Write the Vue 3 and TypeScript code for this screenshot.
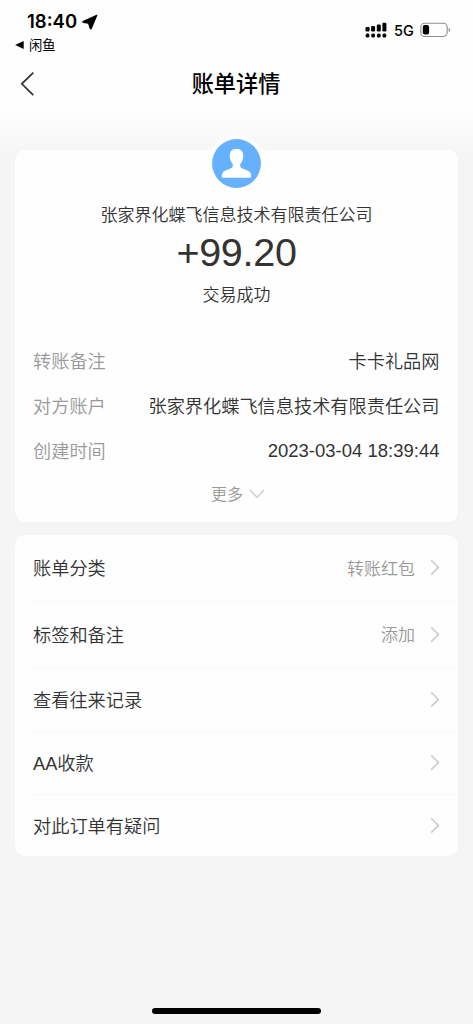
<script setup lang="ts">
interface Detail {
  label: string
  value: string
  numeric?: boolean
}

interface MenuItem {
  label: string
  value?: string
  size: 'tall' | 'medium' | 'short' | 'last'
}

const company = '张家界化蝶飞信息技术有限责任公司'

const details: Detail[] = [
  { label: '转账备注', value: '卡卡礼品网' },
  { label: '对方账户', value: company },
  { label: '创建时间', value: '2023-03-04 18:39:44', numeric: true },
]

const menu: MenuItem[] = [
  { label: '账单分类', value: '转账红包', size: 'tall' },
  { label: '标签和备注', value: '添加', size: 'tall' },
  { label: '查看往来记录', size: 'medium' },
  { label: 'AA收款', size: 'short' },
  { label: '对此订单有疑问', size: 'last' },
]
</script>

<template>
  <div class="screen">
    <header class="top">
      <div class="status">
        <div class="status-left">
          <div class="clock">
            <span>18:40</span>
            <svg class="locate" width="16" height="16" viewBox="0 0 16 16">
              <path d="M14.8 1.2 L1 7.4 Q0.6 8.3 1.4 8.5 L6.6 9.3 L8.2 14.6 Q8.9 15.2 9.3 14.5 Z" fill="#000" stroke="#000" stroke-width="1.1" stroke-linejoin="round" />
            </svg>
          </div>
          <div class="return-app">
            <svg width="9" height="8" viewBox="0 0 9 8"><path d="M8.7 0 V8 L0.2 4 Z" fill="#000" /></svg>
            <span>闲鱼</span>
          </div>
        </div>
        <div class="status-right">
          <svg class="signal" width="22" height="16" viewBox="0 0 22 16">
            <g fill="#000">
              <rect x="0.5" y="5" width="4" height="4.5" rx="1.2" />
              <rect x="6.1" y="4" width="4" height="5.5" rx="1.2" />
              <rect x="11.8" y="2.5" width="4" height="7" rx="1.2" />
              <rect x="17.4" y="0.8" width="4" height="8.7" rx="1.2" />
              <rect x="0.6" y="11.6" width="3.8" height="4" rx="1.5" />
              <rect x="6.2" y="11.6" width="3.8" height="4" rx="1.5" />
              <rect x="11.9" y="11.6" width="3.8" height="4" rx="1.5" />
              <rect x="17.5" y="11.6" width="3.8" height="4" rx="1.5" />
            </g>
          </svg>
          <span class="network">5G</span>
          <svg class="battery" width="31" height="16" viewBox="0 0 31 16">
            <rect x="0.8" y="1.2" width="26.4" height="13.3" rx="4" fill="none" stroke="#8e8e8e" stroke-width="1.1" />
            <rect x="2.8" y="3.1" width="6.3" height="9.5" rx="2" fill="#000" />
            <path d="M28.7 6 Q30.2 6.6 30.2 8 T28.7 10 Z" fill="#8e8e8e" />
          </svg>
        </div>
      </div>
      <nav class="nav">
        <svg class="back" width="15" height="26" viewBox="0 0 15 26">
          <path d="M13.3 1.7 L1.8 12.8 L13.3 24.2" fill="none" stroke="#333" stroke-width="1.7" />
        </svg>
        <h1>账单详情</h1>
        <span class="nav-end"></span>
      </nav>
    </header>

    <main>
      <section class="card summary">
        <div class="avatar">
          <svg width="49" height="49" viewBox="0 0 49 49">
            <circle cx="24.5" cy="24.5" r="24.4" fill="#66b1ff" />
            <path d="M24.5 9.8 C28.8 9.8 31.5 12.7 31.3 17 C31.1 20.6 30 23 28.4 24.8 C27.8 27.5 28.3 28.7 30.4 29.6 L35.5 31.6 C38.4 32.8 39.2 34.5 39.2 37.8 Q39.2 38.7 38.2 38.7 H10.8 Q9.8 38.7 9.8 37.8 C9.8 34.5 10.6 32.8 13.5 31.6 L18.6 29.6 C20.7 28.7 21.2 27.5 20.6 24.8 C19 23 17.9 20.6 17.7 17 C17.5 12.7 20.2 9.8 24.5 9.8 Z" fill="#fff" />
          </svg>
        </div>
        <p class="payer">{{ company }}</p>
        <p class="amount">+99.20</p>
        <p class="state">交易成功</p>
        <dl class="details">
          <div v-for="item in details" :key="item.label" class="detail">
            <dt>{{ item.label }}</dt>
            <dd :class="{ numeric: item.numeric }">{{ item.value }}</dd>
          </div>
        </dl>
        <div class="more">
          <span>更多</span>
          <svg width="16" height="10" viewBox="0 0 16 10"><path d="M1 1 L8 8.2 L15 1" fill="none" stroke="#ccc" stroke-width="1.5" /></svg>
        </div>
      </section>

      <section class="card menu">
        <div v-for="item in menu" :key="item.label" class="row" :class="item.size">
          <span class="row-label">{{ item.label }}</span>
          <span v-if="item.value" class="row-value">{{ item.value }}</span>
          <svg width="10" height="17" viewBox="0 0 10 17"><path d="M1.2 1.2 L8.4 8.4 L1.2 15.6" fill="none" stroke="#ccc" stroke-width="1.6" /></svg>
        </div>
      </section>
    </main>

    <div class="home-bar"></div>
  </div>
</template>

<style>
body {
  margin: 0;
  background: #f5f5f5;
}
</style>

<style scoped>
.screen {
  display: flex;
  flex-direction: column;
  box-sizing: border-box;
  width: 473px;
  height: 1024px;
  overflow: hidden;
  background: linear-gradient(#fefefe 0, #fefefe 112px, #f5f5f5 156px);
  color: #333;
  font-family: "Liberation Sans", "Noto Sans CJK SC", sans-serif;
  font-weight: 350;
}

.top {
  height: 112px;
}

.status {
  display: flex;
  justify-content: space-between;
  height: 56px;
  box-sizing: border-box;
  padding: 10px 22px 0 15px;
  color: #000;
}

.clock {
  display: flex;
  align-items: center;
  gap: 5px;
  height: 23px;
  padding-left: 12px;
  font: 600 18.5px/23px Inter, sans-serif;
}

.return-app {
  display: flex;
  align-items: center;
  gap: 5px;
  height: 23px;
  font-size: 13.3px;
  line-height: 20px;
  font-weight: 400;
}

.return-app span {
  padding-top: 2px;
}

.status-right {
  display: flex;
  align-items: center;
  height: 16px;
  padding-top: 12px;
}

.network {
  width: 20px;
  margin: 1px 6px 0 7px;
  font: 500 14.5px/16px Inter, sans-serif;
}

.nav {
  display: flex;
  align-items: center;
  justify-content: space-between;
  height: 56px;
  padding: 0 20px;
}

.nav h1 {
  margin: 2px 0 0;
  padding-right: 1px;
  color: #000;
  font-size: 22.2px;
  line-height: 32px;
  font-weight: 500;
}

.nav-end {
  width: 15px;
}

.card {
  margin: 0 15px;
  border-radius: 10px;
  background: #fefefe;
}

.summary {
  display: flex;
  flex-direction: column;
  align-items: center;
  height: 372px;
  margin-top: 38px;
}

.avatar {
  height: 49px;
  padding: 4px;
  margin-top: -15px;
  border-radius: 50%;
  background: #fefefe;
}

.summary p {
  margin: 0;
}

.payer {
  padding-top: 11px;
  font-size: 17px;
  line-height: 26px;
}

.summary .amount {
  margin-top: -1px;
  font-size: 39.5px;
  line-height: 48px;
  font-weight: 400;
  letter-spacing: -0.3px;
}

.state {
  padding-top: 7px;
  font-size: 17px;
  line-height: 26px;
}

.summary .details {
  align-self: stretch;
  margin: 28px 18.5px 0 18px;
}

.detail {
  display: flex;
  align-items: center;
  justify-content: space-between;
  height: 45px;
  font-size: 18.2px;
}

.detail dt {
  color: #999;
}

.detail dd {
  margin: 0;
}

.detail .numeric {
  padding-top: 3px;
  font-size: 18.5px;
}

.more {
  display: flex;
  align-items: center;
  gap: 6px;
  height: 44px;
  padding-left: 3px;
  color: #999;
  font-size: 16px;
}

.more span {
  padding-bottom: 2px;
}

.menu {
  margin-top: 13px;
  padding-left: 18px;
}

.row {
  display: flex;
  align-items: center;
  box-sizing: border-box;
  height: 66.5px;
  padding-right: 18px;
  border-bottom: 1px solid #f8f8f8;
  font-size: 18.2px;
}

.medium {
  height: 63.5px;
}

.short {
  height: 63px;
}

.last {
  height: 61.5px;
  border-bottom: 0;
}

.row-label,
.row-value {
  padding-bottom: 1px;
}

.row-label {
  flex: 1;
}

.row-value {
  margin-right: 15px;
  color: #999;
  font-size: 17px;
}

.home-bar {
  width: 169px;
  height: 6px;
  margin: auto auto 10px;
  border-radius: 3px;
  background: #000;
}
</style>
